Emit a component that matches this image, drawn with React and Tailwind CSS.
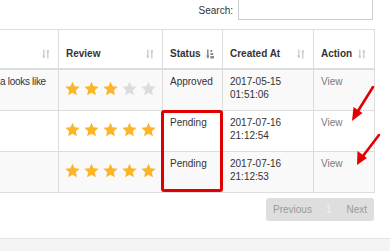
import React from "react";

const Star = ({ on }) => (
  <svg width="15" height="15" viewBox="0 0 24 24" className="block">
    <polygon
      points="12,1 15.29,8.47 23.41,9.29 17.33,14.73 19.05,22.71 12,18.6 4.95,22.71 6.67,14.73 0.59,9.29 8.71,8.47"
      fill={on ? "#fbb526" : "#dcdcdc"}
    />
  </svg>
);

const SortIcon = () => (
  <svg width="8" height="10" viewBox="0 0 8 10" className="block">
    <g stroke="#cfcfcf" strokeWidth="1.5" fill="none">
      <line x1="1.8" y1="0.5" x2="1.8" y2="9" />
      <line x1="5.8" y1="1" x2="5.8" y2="9.5" />
    </g>
    <polygon points="0,6.5 3.6,6.5 1.8,9.6" fill="#cfcfcf" />
    <polygon points="4,3.5 7.6,3.5 5.8,0.4" fill="#cfcfcf" />
  </svg>
);

const SortActive = () => (
  <svg width="8" height="10" viewBox="0 0 8 10" className="block">
    <line x1="1.8" y1="0.5" x2="1.8" y2="9" stroke="#8a8a8a" strokeWidth="1.6" />
    <polygon points="0,6.5 3.6,6.5 1.8,9.6" fill="#8a8a8a" />
    <rect x="4.4" y="1" width="1.8" height="2" fill="#8a8a8a" />
    <rect x="4.4" y="4" width="2.8" height="2" fill="#8a8a8a" />
    <rect x="4.4" y="7" width="3.6" height="2.5" fill="#8a8a8a" />
  </svg>
);

const Th = ({ children, active }) => (
  <div className="h-[40px] border-b-2 border-r border-[#dddddd] flex items-end justify-between pl-[7px] pr-[8px] pb-[8px] font-bold leading-[12px]">
    <span>{children}</span>
    <span className="mb-[1px]">{active ? <SortActive /> : <SortIcon />}</span>
  </div>
);

const rows = [
  { text: "a looks like", stars: 3, status: "Approved", d: "2017-05-15", t: "01:51:06" },
  { text: "", stars: 5, status: "Pending", d: "2017-07-16", t: "21:12:54" },
  { text: "", stars: 5, status: "Pending", d: "2017-07-16", t: "21:12:53" },
];

export default function App() {
  return (
    <div className="relative w-[390px] h-[251px] overflow-hidden bg-white text-[10px] text-[#333333] font-['Liberation_Sans',Arial,sans-serif] flex flex-col">
      <div className="flex justify-end items-center pr-[17px] h-[21px] mt-[-1px] shrink-0">
        <span className="mr-[5px] mt-[2px]">Search:</span>
        <div className="w-[135px] h-[21px] border border-[#cccccc] bg-white" />
      </div>

      <div className="mt-[9px] w-[375px] grid grid-cols-[59px_104px_60px_91px_61px] border-t border-[#dddddd] shrink-0">
        <Th>&nbsp;</Th>
        <Th>Review</Th>
        <Th active>Status</Th>
        <Th>Created At</Th>
        <Th>Action</Th>
        {rows.map((r, i) => {
          const bg = i % 2 === 0 ? "bg-[#f9f9f9]" : "bg-white";
          const cell = `h-[41px] border-b border-r border-[#dddddd] ${bg} leading-[12.5px]`;
          return (
            <React.Fragment key={i}>
              <div className={`${cell} pt-[6px] overflow-hidden whitespace-nowrap tracking-[-0.3px]`}>
                {r.text}
              </div>
              <div className={`${cell} pt-[11px] pl-[6px] flex gap-[4px] items-start`}>
                {[0, 1, 2, 3, 4].map((k) => (
                  <Star key={k} on={k < r.stars} />
                ))}
              </div>
              <div className={`${cell} pt-[6px] pl-[7px]`}>{r.status}</div>
              <div className={`${cell} pt-[6px] pl-[7px]`}>
                <div>{r.d}</div>
                <div>{r.t}</div>
              </div>
              <div className={`${cell} pt-[6px] pl-[7px] text-[#7a7a7a]`}>View</div>
            </React.Fragment>
          );
        })}
      </div>

      <div className="flex justify-end pr-[16px] mt-[5px] shrink-0">
        <div className="h-[23px] rounded-[3px] bg-[#dedede] flex items-center text-[#9a9a9a]">
          <span className="pl-[7px] pr-[7px]">Previous</span>
          <span className="px-[7px] text-[#f2f2f2]">1</span>
          <span className="pl-[8px] pr-[7px]">Next</span>
        </div>
      </div>

      <div className="mt-[17px] flex-1 border-t border-[#e2e2e2] bg-[#f4f4f4]" />

      <div className="absolute left-[161px] top-[110px] w-[62px] h-[82px] border-[3px] border-[#e00000] rounded-[3px]" />

      <svg className="absolute left-0 top-0" width="390" height="251" viewBox="0 0 390 251">
        <g stroke="#e30000" strokeWidth="2.6" strokeLinecap="round">
          <line x1="373" y1="87" x2="358" y2="111" />
          <line x1="379" y1="135" x2="363" y2="156" />
        </g>
        <polygon points="352,121 353.5,107 362.5,113" fill="#e30000" />
        <polygon points="357,165 357.5,151 367,158" fill="#e30000" />
      </svg>
    </div>
  );
}
